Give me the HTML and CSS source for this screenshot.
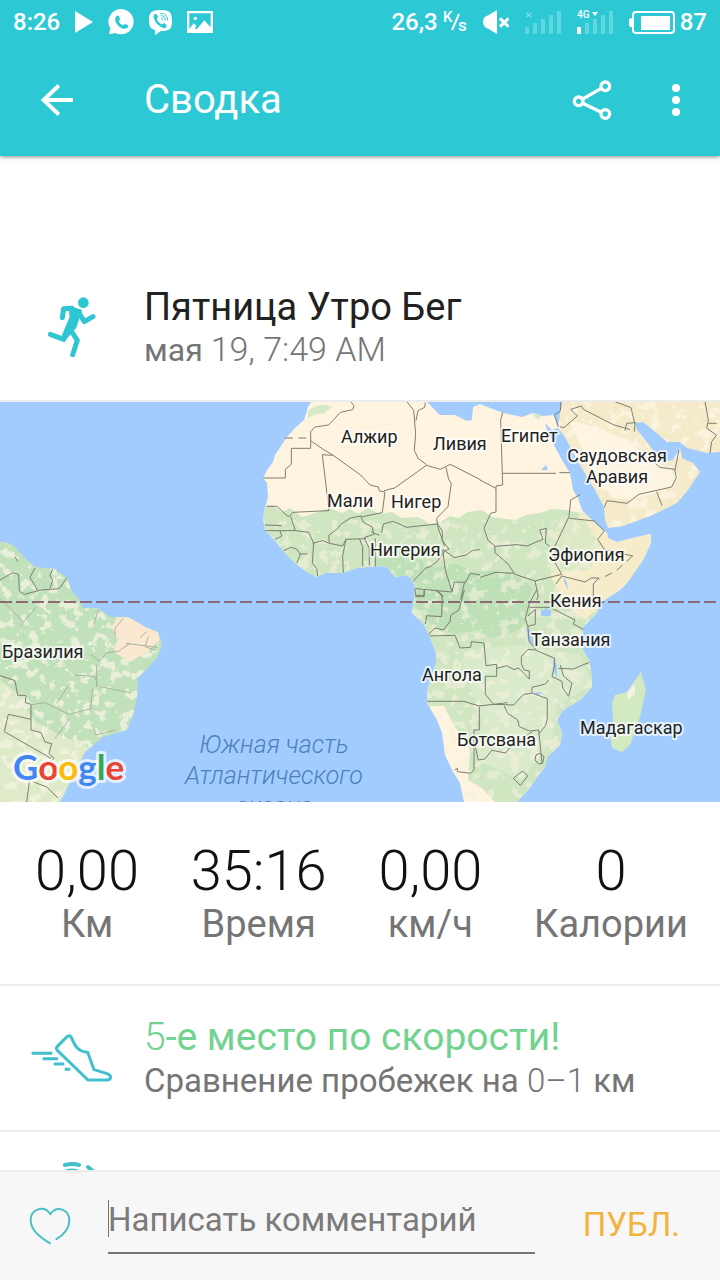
FILE: index.html
```html
<!DOCTYPE html>
<html lang="ru">
<head>
<meta charset="utf-8">
<meta name="viewport" content="width=device-width, initial-scale=1">
<title>Сводка</title>
<link rel="stylesheet" href="styles.css">
</head>
<body>
<div class="app">
  <header class="top">
    <div class="status">
      <div class="status-group">
        <span>8:26</span>
        <svg width="18" height="22" viewBox="0 0 18 22"><path fill="currentColor" d="M0 0L18 11 0 22z"/></svg>
        <svg width="26" height="26" viewBox="0 0 78 78"><path fill="currentColor" d="M40 0a38 38 0 1 1-18 72L3 76 7 58A38 38 0 0 1 40 0z"/><path class="cut" d="M25 22c4-4 8-2 9 3l2 6c0 3-3 4-4 6 3 6 7 9 13 12 3-2 4-5 7-4l8 4c3 2 0 8-4 9-8 4-18-1-25-8-8-8-13-20-6-28z"/></svg>
        <svg width="23" height="25" viewBox="0 0 69 75"><path fill="currentColor" d="M35 0c28 0 34 8 34 32S63 63 36 63L18 75V60C4 56 0 48 0 32 0 8 7 0 35 0z"/><path class="cut" d="M17 13c4-3 8 2 10 7 1 4-4 5-3 8 3 8 8 13 14 15 3 1 4-5 8-3 5 3 9 6 6 10-4 6-9 5-14 2C26 46 18 36 14 24c-1-5 0-9 3-11z"/><path class="cut-line" d="M34 10c15 0 22 9 22 22M35 17c9 0 14 5 14 14M36 24c4 0 6 3 6 6"/></svg>
        <svg width="26" height="22" viewBox="0 0 78 66"><path fill="none" stroke="currentColor" stroke-width="7" d="M3.500 3.500h71v59h-71z"/><circle cx="25" cy="22" r="5" fill="currentColor"/><path fill="currentColor" d="M5 56L20 37l8 7-4 9 6 1 22-26 22 24v10H5z"/></svg>
      </div>
      <div class="status-group status-right">
        <span class="speed">26,3 <svg width="24" height="26" viewBox="0 0 24 26" role="img" aria-label="K/s"><text x="0" y="13" font-size="15">K</text><path stroke="currentColor" stroke-width="2" d="M9 21L16 5"/><text x="15" y="22" font-size="17">s</text></svg></span>
        <svg width="26" height="24" viewBox="0 0 78 72"><path fill="currentColor" d="M42 0v72L16 56Q0 52 0 36T16 16z"/><path stroke="currentColor" stroke-width="9" d="M51 25l26 25M77 25L51 50"/></svg>
        <svg width="36" height="24" viewBox="0 0 108 72"><path stroke="currentColor" stroke-width="4" opacity=".35" d="M3 8l16 14M19 8L3 22"/><path class="dim" d="M0 51h12v21H0zM24 40h12v32H24zM48 27h12v45H48zM72 15h12v57H72zM96 3h12v69H96z"/></svg>
        <svg width="36" height="24" viewBox="0 0 36 24"><text x="0" y="8" font-size="10">4G</text><path fill="currentColor" d="M15 2h6l-3 4zM0 17h4v7H0z"/><path class="dim" d="M8 13h4v11H8zM16 9h4v15h-4zM24 5h4v19h-4zM32 1h4v23h-4z"/></svg>
        <span class="battery"><svg width="46" height="23" viewBox="0 0 46 23"><rect x="4" y="1" width="41" height="21" rx="3" fill="none" stroke="currentColor" stroke-width="2"/><path fill="currentColor" d="M0 9q0-2 3-2v9q-3 0-3-2zM12 5h29v14H12z"/></svg>87</span>
      </div>
    </div>
    <nav class="bar">
      <button class="icon-btn back" aria-label="Назад"><svg width="33" height="32" viewBox="118 252 100 96"><path class="line" stroke-width="12" d="M218 300H126M175 256l-46 44 46 44"/></svg></button>
      <h1>Сводка</h1>
      <button class="icon-btn" aria-label="Поделиться"><svg width="40" height="40" viewBox="636 240 118 120"><g class="line" stroke-width="10"><path d="M667 297l56-32M667 310l56 27"/><circle cx="655" cy="304" r="13"/><circle cx="735" cy="259" r="13"/><circle cx="735" cy="342" r="13"/></g></svg></button>
      <button class="icon-btn more" aria-label="Ещё"><svg width="8" height="32" viewBox="0 0 8 32"><g fill="currentColor"><circle cx="4" cy="4" r="4"/><circle cx="4" cy="16" r="4"/><circle cx="4" cy="28" r="4"/></g></svg></button>
    </nav>
  </header>

  <main class="content">
    <section class="row activity">
      <svg class="row-icon" width="48" height="60" viewBox="144 84 144 180"><g fill="none" stroke="#2fc6d3" stroke-width="15" stroke-linecap="round" stroke-linejoin="round"><circle cx="250" cy="101" r="16" fill="#2fc6d3" stroke="none"/><path d="M187 146l4-27 25-1M237 132l16 26 26-15M203 185l-12 26-40-15M210 180l22 34-14 43"/><path fill="#2fc6d3" stroke-width="9" d="M211 116l30 10-16 48-26 30-9-4 23-54z"/></g></svg>
      <div>
        <h2 class="activity-title">Пятница Утро Бег</h2>
        <p class="sub">мая <span class="latin date">19, 7:49 AM</span></p>
      </div>
    </section>

    <svg class="map" viewBox="0 402 720 400" role="img" aria-label="Карта">
      <defs>
        <path id="africa" d="M311 402L308 407 304 420 295 428 287 437 275 455 273 462 267 470 263 478 267 483 268 497 265 508 263 517 265 530 277 543 285 553 295 563 307 572 317 577 325 573 342 573 357 568 367 567 378 566 387 567 395 577 407 575 412 580 415 587 414 600 412 613 423 623 430 637 436 653 436 663 430 680 427 693 427 703 437 720 442 733 445 755 452 770 460 783 464 802H517L528 790 537 777 545 767 547 757 560 745 562 733 557 720 563 710 580 700 592 687 591 670 589 660 583 650 583 627 597 613 600 603 620 590 627 583 643 560 651 543 651 534 637 537 617 542 608 538 607 533 597 525 582 510 578 498 573 490 570 473 562 460 555 447 548 433 545 423 552 430 558 428 555 415 542 416 533 413 522 417 503 413 480 404 473 407 472 420 467 421 455 415 440 415 430 405 427 402z"/>
        <path id="arabia" d="M562 402L560 413 558 428 565 437 577 460 587 477 595 490 604 507 605 520 608 528 623 526 653 515 677 503 688 490 700 472 693 463 682 458 680 448 673 460 662 462 653 450 643 437 637 430 635 423 643 422 653 430 667 442 680 442 687 448 707 453 720 452V402z"/>
        <path id="america" d="M0 541L13 545 25 558 35 567 55 569 67 578 72 592 80 600 83 608 97 608 110 617 128 617 147 628 158 632 162 645 157 658 138 678 137 697 133 715 127 730 103 737 85 752 70 782 60 802H0z"/>
        <path id="madagascar" d="M641 672L646 690 640 717 630 745 622 752 612 748 610 737 613 723 612 703 615 695 627 692 635 680z"/>
        <clipPath id="clip-africa"><use href="#africa"/></clipPath>
        <clipPath id="clip-arabia"><use href="#arabia"/></clipPath>
        <clipPath id="clip-america"><use href="#america"/></clipPath>
        <clipPath id="clip-madagascar"><use href="#madagascar"/></clipPath>
        <filter id="patches" x="0" y="0" width="1" height="1" color-interpolation-filters="sRGB"><feTurbulence type="fractalNoise" baseFrequency=".1" numOctaves="5" seed="11" result="n"/><feColorMatrix type="matrix" values="0 0 0 0 0  0 0 0 0 0  0 0 0 0 0  12 0 0 0 -6.600"/><feComposite in="SourceGraphic" operator="in"/></filter>
      </defs>
      <rect y="402" width="720" height="400" fill="#a2ccfe"/>

      <g clip-path="url(#clip-africa)">
        <rect x="250" y="402" width="420" height="400" fill="#fef4e0"/>
        <path fill="#cfe6c1" d="M260 508L272 505 282 512 290 508 302 517 318 512 330 508 342 513 350 509 358 514 368 508 380 514 392 512 402 518 418 517 430 524 441 522 450 516 458 518 468 512 482 510 492 517 506 519 516 520 526 515 540 513 552 509 566 510 590 515 600 530 606 560 600 600 600 700 560 802H495L482 788 468 780 470 750 452 722 444 706H425L410 590 300 590 260 540z"/>
        <path fill="#f6ecc9" d="M580 510L600 528 614 542 652 532 645 565 604 604 584 620 566 605 550 575 570 560z"/>
        <path fill="#dbe9c5" d="M562 515L585 520 600 545 590 570 560 572 548 545z"/>
        <path fill="#bde0b6" d="M418 580L432 573 452 570 480 572 502 570 520 578 533 588 528 600 530 615 522 628 508 634 490 638 476 630 456 634 435 628 415 610zM370 548l40 5 25 15 20-5 20 10-60 10-22-10-25-5z"/>
        <path fill="#d9ebcb" d="M470 650l50-5 60 10 12 30-35 20-5 35-30 40-45-20 5-40-20-60z"/>
        <rect x="260" y="520" width="340" height="278" fill="#f4f1dc" opacity=".6" filter="url(#patches)"/>
      </g>
      <path fill="#d5e9c5" d="M308 411q8-7 16-6l8 2-8 6-8 1-8 4zM532 414l10 1-4 5z"/>

      <use href="#arabia" fill="#f5ebca"/>
      <g clip-path="url(#clip-arabia)">
        <path fill="#fdf4e1" d="M568 420L600 428 625 440 645 455 672 470 674 486 650 495 630 500 612 498 590 465z"/>
        <rect x="556" y="402" width="164" height="130" fill="#fff8e9" opacity=".6" filter="url(#patches)"/>
      </g>

      <use href="#america" fill="#c0e1ba"/>
      <g clip-path="url(#clip-america)">
        <path fill="#dfebc8" d="M0 680L20 695 32 720 60 735 90 748 65 802H0z"/>
        <rect x="0" y="540" width="165" height="262" fill="#f3f3e0" opacity=".8" filter="url(#patches)"/>
        <path fill="#fbe8d1" d="M118 614l18 6 22 12 2 8-14 12-16 10-16-10 4-14-6-10z"/>
      </g>
      <use href="#madagascar" fill="#d2e9c1"/>
      <path fill="#f5f2e6" d="M627 692l8-8v10l-7 6z" clip-path="url(#clip-madagascar)"/>
      <g fill="#a2ccfe"><path d="M541 610h3l3-4 1 4h3v6h-10zM526 628l4 2 5 17-6-6zM553 658l4 8v12l-4-8zM534 692l10 1-7 2zM564 577l3 6 1 7-4-8zM541 470l5-5 2 5z"/></g>

      <g class="border">
        <g transform="translate(240 400) scale(.3333)">
          <path d="M332 5l10 12-4 12-37 8-35 38-42 6-12 14v50h-58v48l-18 15v26H69M212 122l36 25 30 18 84 60 28 30 25 6 3 12 17 3-8 62-64 13M278 166l-31-2 20 168-108 5-10 12-8-2-30-28H80M152 350l14 42 40 5 15 32-4 60 14 18 2 22M75 375l50 2M75 392l90 0M105 418l20-10-5-15M132 452l20-10 18 5 10 15 22 0M170 490l12-30M218 430l30-8 20 8 40 8 10-20 60-2M268 428l-2-22 25-18 10-14 30-20 32-6 6 18 28 15 4 22-28 10M318 418l-10 50 2 50M358 416l10 24v58M372 414l16 30v52M395 395l10 6 14 5M406 500V416M425 398l5-26 30-8 40 18 92-10 15 20 0 30 20 25-12 6-24 32-20 15-15 5-36 38M432 272l32-8 95-68 42 12 30-15 90 46M560 194l-25-18-12-25 4-50-6-70-20-26M528 62l6-30 20-10 2-14M618 202l8 36 8 12-10 70-34 35 4 28 20 55M608 450l8 60 20 65M608 448l35 25 35-8 20-14 22-2M527 566l108 10M525 566l2 20h26v-18M636 576l7-30 34 1 14-27 29 5M674 545l-12 54M595 572l12 20"/>
          <path stroke-dasharray="24 16" d="M135 114h80"/>
        </g>
        <g transform="translate(480 400) scale(.3333)">
          <path d="M68 38L62 60l6 195-20 3v78l-16 4-20 45 12 36 22 18 65-5 30 4 28-12 20-8-10-28 20-5-3 44 13 10M68 220h160M238 218h32M0 240l48 25M45 438v20l40 35 20 30 60 20 80-20-20-35 0-50 42-88 5-50 28-16M268 355l75 8 30 30-20 25 20 30 85 20M240 80l12 3 40-35-20-20 32-10 6 10 90 46 50 15M235 80l-12-35 18-12 2-28M405 5l48 18 12 50-2 22M435 92l5-22 28-2M373 322l8-20 60 8 36-27 98-22 14-28-5-25-45-6-15-15M530 275l16 42M585 210l12-60M675 5l10 55-5 25 30 20-15 20-5 35M710 70h-25M0 532l48-15 55 3M165 543l10 45-5 12M228 552l17-24 70 18 20-12h22l-17 18v45"/>
          <path stroke-dasharray="24 16" d="M458 468l-50 45-50 25"/>
        </g>
        <g transform="translate(400 590) scale(.3333)">
          <path d="M72 0v20H45M105 0l22 15-2 65-45-3-4 25M193 0l-16 60-24 15-3 20-20 25-25-6-20 20M90 138l75-2 15 38 32-2 2-17 38 4 6 68 32-4v36h-34v54l25 30 60 2 30-32 25-3v-18l40-10 10-12M290 235l30-8 22 12 14-5 32 33v-24l-16-3-8-20V200l20-22 22 2 58 25 0 20-8 35 30 14 2 20 18 25 10-40-25-20-10-34M475 235l45 2 48-20M82 334h110l45 14 70-8 15-2M238 350v70h-16v120l-10 10-40-5v-10l-8 5M313 348l10 22 30 20 5 20 30 13 28-3 10 100M398 310l44 16v60l-5 20-20 25M225 465l10 45 20-3 20-26 42 8 10-14 40-30 30-20M408 495l12-5 12 10-4 20-12 2-11-12zM340 565l28-22 15 15-22 28zM410 0l-22 40-12 45 8 28 3 40 20 25M388 52h62l75 38-5 12 30 16M384 78l22-20 0 45-22 6"/>
        </g>
        <g transform="translate(0 530) scale(.3333)">
          <path d="M0 150l38-22 18 5 2 50 15 10 50-13 55-4 22-32M105 114l-15 28 22 38M158 118l-8 18 8 15-8 24M45 80l8 15M0 437l45 15 8 44h25l-2 22 17 5 0 45-68-15-12 52 140 80M93 568l0 32 30 8 12 28 20 5-8 30 15 14-30 30-40 10-12 91M100 756l40 15 35 34"/>
          <path class="soft" d="M0 206l70 70M110 230l-50 58M95 524l40-6 72 35 70-18M278 475l-6 60M225 435l60 5 8 28M290 405v65M300 470l90 18M295 240l-14 44M370 265l-25 30v28M378 340l95 12M390 340l-35 24-35 5-22 25-25-20M440 305l-20 18M445 320l-10 30 30 10M170 520l40-60M210 565l-45 60M280 590l8 25 60-15"/>
        </g>
      </g>

      <path class="equator" d="M0 602H720"/>

      <g class="country">
        <text x="341" y="443">Алжир</text><text x="433" y="450">Ливия</text><text x="501" y="442">Египет</text>
        <text x="617" y="462" text-anchor="middle">Саудовская</text><text x="617" y="483" text-anchor="middle">Аравия</text>
        <text x="327" y="507">Мали</text><text x="391" y="508">Нигер</text><text x="370" y="556">Нигерия</text>
        <text x="548" y="561">Эфиопия</text><text x="550" y="607">Кения</text><text x="531" y="646">Танзания</text>
        <text x="422" y="681">Ангола</text><text x="457" y="746">Ботсвана</text><text x="580" y="734">Мадагаскар</text>
        <text x="2" y="658">Бразилия</text>
      </g>
      <g class="ocean"><text x="274" y="753">Южная часть</text><text x="274" y="784">Атлантического</text><text x="274" y="815">океана</text></g>
      <text class="brand" x="13" y="780"><tspan fill="#4285f4">G</tspan><tspan fill="#ea4335">o</tspan><tspan fill="#fbbc05">o</tspan><tspan fill="#4285f4">g</tspan><tspan fill="#34a853">l</tspan><tspan fill="#ea4335">e</tspan></text>
    </svg>

    <dl class="stats">
      <div class="stat"><dt>Км</dt><dd>0,00</dd></div>
      <div class="stat"><dt>Время</dt><dd>35:16</dd></div>
      <div class="stat"><dt>км/ч</dt><dd>0,00</dd></div>
      <div class="stat"><dt>Калории</dt><dd>0</dd></div>
    </dl>

    <section class="row award">
      <svg class="row-icon" width="82" height="50" viewBox="94 70 246 150"><g fill="none" stroke="#41bfcb" stroke-width="9" stroke-linejoin="round"><path d="M203 80q8-4 12 3C226 110 236 126 264 128L283 180 320 191C338 197 336 211 320 211H265L173 122q-5-6 0-12z"/><path d="M96 131h62M129 147h46M162 163h32M195 179h17"/></g></svg>
      <div>
        <h2 class="award-title"><span class="latin">5</span>-е место по скорости!</h2>
        <p class="sub award-sub">Сравнение пробежек на <span class="latin">0–1</span> км</p>
      </div>
    </section>

    <section class="row award">
      <svg class="row-icon" width="82" height="50" viewBox="0 0 82 50"><g fill="none" stroke="#41bfcb" stroke-width="4" stroke-linecap="round"><path d="M34 5q8-2 14 0M57 7l6 5"/><circle cx="41" cy="29" r="19" stroke-width="3"/></g></svg>
    </section>
  </main>

  <form class="composer">
    <button class="icon-btn like" type="button" aria-label="Нравится"><svg width="42" height="38" viewBox="87 137 126 114"><path fill="none" stroke="#4bbfc9" stroke-width="6" d="M152 247C118 228 92 205 92 177 92 143 132 130 151 158 170 130 208 144 208 178 208 202 190 221 167 235"/></svg></button>
    <input class="comment" type="text" aria-label="Написать комментарий" placeholder="Написать комментарий">
    <button class="publish" type="button">ПУБЛ.</button>
  </form>
</div>
</body>
</html>
```
FILE: styles.css
```css
* { box-sizing: border-box; }

body {
  margin: 0;
  font-family: Roboto, "Noto Sans", sans-serif;
  color: #212121;
  background: #fff;
}

h1, h2, p, dl, dd { margin: 0; font-weight: 400; }

svg { display: block; flex: none; }

button {
  padding: 0;
  border: 0;
  background: none;
  color: inherit;
  font: inherit;
}

.app {
  display: flex;
  flex-direction: column;
  height: 100vh;
}

/* Status and title bars */
.top {
  position: relative;
  background: #2cc9d5;
  color: #fff;
  box-shadow: 0 1px 4px rgba(0, 0, 0, .45);
}

.status {
  display: flex;
  justify-content: space-between;
  align-items: center;
  height: 44px;
  padding: 0 13px;
  font-size: 24px;
  font-weight: 500;
}

.status-group { display: flex; align-items: center; gap: 15px; }
.status-right { gap: 16px; }
.status-group text { fill: currentColor; }
.speed, .battery { display: flex; align-items: center; gap: 5px; }
.cut { fill: #2cc9d5; }
.cut-line { fill: none; stroke: #2cc9d5; stroke-width: 3; }
.dim { fill: currentColor; opacity: .25; }
.line { fill: none; stroke: currentColor; }

.bar {
  display: flex;
  align-items: center;
  height: 112px;
  padding: 0 40px;
}

.bar h1 { flex: 1; font-size: 40px; line-height: 48px; }
.icon-btn { display: flex; align-items: center; justify-content: center; }
.back { margin-right: 71px; }
.more { margin-left: 60px; }

/* Scrolling content */
.content {
  flex: 1;
  min-height: 0;
  overflow: hidden;
}

.row {
  display: grid;
  grid-template-columns: 144px 1fr;
  align-items: center;
  border-bottom: 2px solid #ececec;
}

.row-icon { justify-self: center; }
.activity { padding: 128px 0 30px; }
.activity-title { font-size: 38px; line-height: 46px; }
.sub { font-size: 32px; line-height: 40px; color: #757575; }
.latin { font-weight: 300; }
.date { font-size: 34px; line-height: 1; }

/* Map */
.map { width: 100%; height: auto; }
.border { fill: none; stroke: #7b7e72; stroke-width: 3; }
.soft { stroke: #a9b5a0; }
.equator { stroke: #8d6876; stroke-width: 2; stroke-dasharray: 12 4; }

.country {
  font-size: 18px;
  fill: #222;
  stroke: rgba(255, 255, 255, .7);
  stroke-width: 4px;
  stroke-linejoin: round;
  paint-order: stroke;
}

.ocean {
  font-size: 25px;
  font-style: italic;
  font-weight: 300;
  fill: #4d7fbd;
  text-anchor: middle;
}

.brand {
  font-family: Lato, sans-serif;
  font-size: 35px;
  font-weight: 700;
  stroke: rgba(255, 255, 255, .7);
  stroke-width: 6px;
  stroke-linejoin: round;
  paint-order: stroke;
}

/* Totals */
.stats {
  display: flex;
  justify-content: space-between;
  padding: 38px 32px;
  border-bottom: 2px solid #ececec;
}

.stat {
  display: flex;
  flex-direction: column-reverse;
  align-items: center;
  min-width: 110px;
}

.stat dt { font-size: 38px; line-height: 44px; color: #757575; }
.stat dd {
  font-size: 56px;
  font-weight: 300;
  line-height: 62px;
  color: #111;
}

.award { padding: 28px 0; }
.award-title { font-size: 39px; line-height: 46px; color: #72d28f; }
.award-sub { font-size: 33px; line-height: 42px; }

/* Comment box */
.composer {
  display: flex;
  align-items: flex-start;
  height: 110px;
  padding: 22px 40px 0 29px;
  border-top: 2px solid #ececec;
  background: #f7f7f7;
}

.like { height: 64px; margin-right: 37px; }

.comment {
  flex: 1;
  min-width: 0;
  height: 60px;
  padding: 0 0 8px;
  border: 0;
  border-bottom: 2px solid #757575;
  border-radius: 0;
  outline: 0;
  background: linear-gradient(#757575, #757575) 0 6px / 1px 37px no-repeat;
  color: #212121;
  font: 33px/44px Roboto, "Noto Sans", sans-serif;
}

.comment::placeholder { color: #7b7b7b; opacity: 1; }

.publish {
  height: 60px;
  margin-left: 48px;
  color: #f3b33f;
  font-size: 33px;
}
```
